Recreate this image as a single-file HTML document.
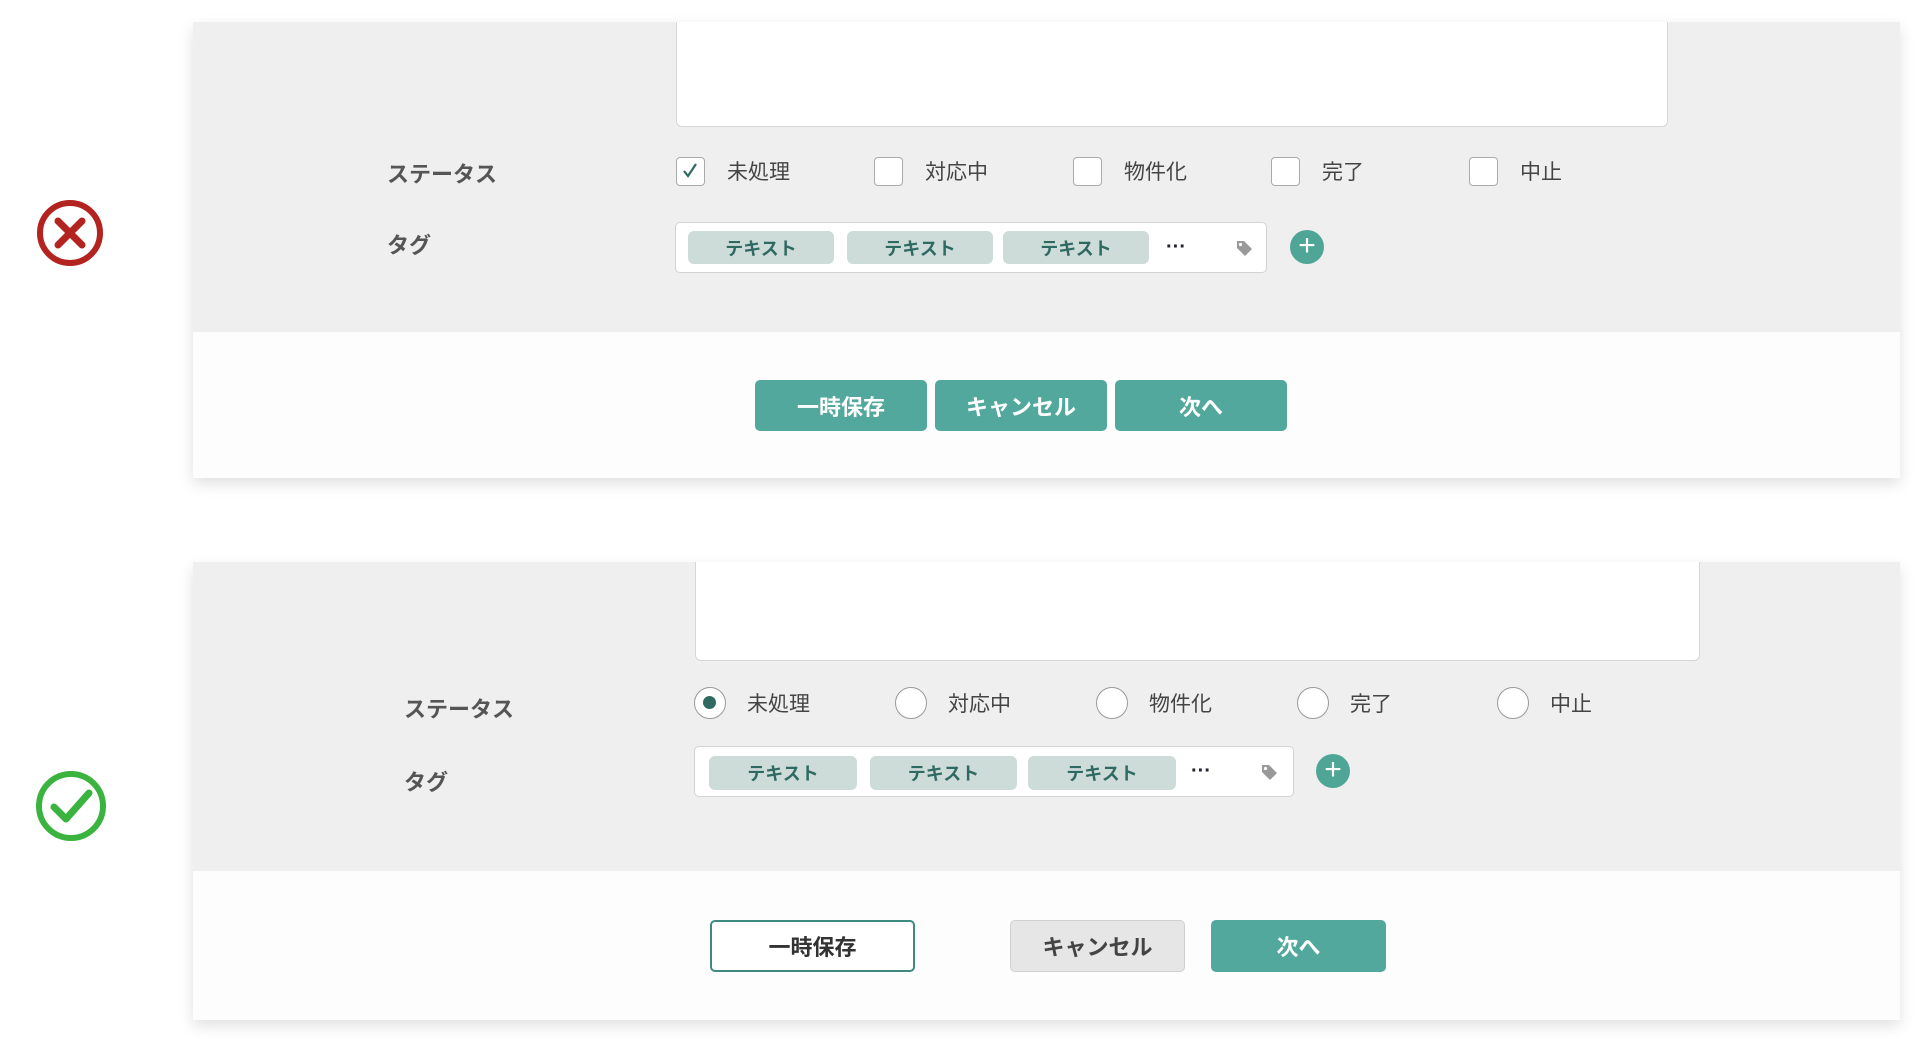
<!DOCTYPE html>
<html><head><meta charset="utf-8"><style>
*{box-sizing:border-box;margin:0;padding:0}
body{width:1920px;height:1039px;background:#fff;position:relative;overflow:hidden;font-family:"Liberation Sans","Noto Sans CJK JP",sans-serif;color:#444}
.a{position:absolute}
.panel{position:absolute;left:193px;width:1707px;background:#fdfdfd;box-shadow:0 6px 14px rgba(0,0,0,.12)}
.gray{position:absolute;left:0;top:0;width:100%;background:#efefef}
.ta{position:absolute;background:#fff;border:1px solid #d6d6d6;border-top:none;border-radius:0 0 6px 6px}
.lbl{position:absolute;font-size:22px;font-weight:bold;color:#555;transform:translateY(-50%)}
.txt{position:absolute;font-size:21px;color:#444;transform:translateY(-50%)}
.cb{position:absolute;width:29px;height:29px;border:1.5px solid #aaa;border-radius:4px;background:#fff}
.rd{position:absolute;width:32px;height:32px;border:1.5px solid #999;border-radius:50%;background:#fff}
.tagbox{position:absolute;background:#fff;border:1px solid #d3d3d3;border-radius:5px}
.chip{position:absolute;background:#cddbd9;border-radius:6px;color:#2f6a62;font-size:18px;font-weight:bold;display:flex;align-items:center;justify-content:center}
.plus{position:absolute;width:34px;height:34px;border-radius:50%;background:#4fa596;color:#fff;font-size:30px;line-height:32px;text-align:center}
.btn{position:absolute;border-radius:5px;font-size:22px;font-weight:bold;display:flex;align-items:center;justify-content:center}
.t{background:#52a89c;color:#fff}
</style></head><body>

<svg class="a" style="left:34px;top:197px" width="72" height="72" viewBox="0 0 72 72"><circle cx="36" cy="36" r="30" fill="none" stroke="#b3231f" stroke-width="6"/><path d="M24 24L48 48M48 24L24 48" stroke="#b3231f" stroke-width="7" stroke-linecap="round"/></svg>
<svg class="a" style="left:34px;top:769px" width="74" height="74" viewBox="0 0 74 74"><circle cx="37" cy="37" r="32" fill="none" stroke="#3bb33f" stroke-width="6"/><path d="M20 38L32 50L55 24" fill="none" stroke="#3bb33f" stroke-width="7" stroke-linecap="round" stroke-linejoin="round"/></svg>

<div class="panel" style="top:22px;height:456px">
  <div class="gray" style="height:310px"></div>
  <div class="ta" style="left:483px;top:0;width:992px;height:105px"></div>
  <div class="lbl" style="left:194px;top:151px">ステータス</div>
  <div class="cb" style="left:483px;top:135px"><svg width="26" height="26" viewBox="0 0 26 26"><path d="M7 13L11 18L19 6" fill="none" stroke="#2f6a62" stroke-width="2.2"/></svg></div>
  <div class="txt" style="left:534px;top:149px">未処理</div>
  <div class="cb" style="left:681px;top:135px"></div><div class="txt" style="left:732px;top:149px">対応中</div>
  <div class="cb" style="left:880px;top:135px"></div><div class="txt" style="left:931px;top:149px">物件化</div>
  <div class="cb" style="left:1078px;top:135px"></div><div class="txt" style="left:1129px;top:149px">完了</div>
  <div class="cb" style="left:1276px;top:135px"></div><div class="txt" style="left:1327px;top:149px">中止</div>
  <div class="lbl" style="left:194px;top:222px">タグ</div>
  <div class="tagbox" style="left:482px;top:200px;width:592px;height:51px">
    <div class="chip" style="left:12px;top:8px;width:146px;height:33px">テキスト</div>
    <div class="chip" style="left:171px;top:8px;width:146px;height:33px">テキスト</div>
    <div class="chip" style="left:327px;top:8px;width:146px;height:33px">テキスト</div>
    <div class="a" style="left:490px;top:13px;font-size:20px;color:#223;font-weight:bold">···</div>
    <svg class="a" style="left:558px;top:15px" width="20" height="20" viewBox="0 0 20 20"><path d="M3 3h7l8 8-7 7-8-8z" fill="#999"/><circle cx="6.5" cy="6.5" r="1.6" fill="#fff"/></svg>
  </div>
  <div class="plus" style="left:1097px;top:208px">+</div>
  <div class="btn t" style="left:562px;top:358px;width:172px;height:51px">一時保存</div>
  <div class="btn t" style="left:742px;top:358px;width:172px;height:51px">キャンセル</div>
  <div class="btn t" style="left:922px;top:358px;width:172px;height:51px">次へ</div>
</div>

<div class="panel" style="top:562px;height:458px">
  <div class="gray" style="height:309px"></div>
  <div class="ta" style="left:502px;top:0;width:1005px;height:99px"></div>
  <div class="lbl" style="left:211px;top:146px">ステータス</div>
  <div class="rd" style="left:501px;top:125px"><div style="position:absolute;left:8px;top:8px;width:13px;height:13px;border-radius:50%;background:#2f6a62"></div></div>
  <div class="txt" style="left:554px;top:141px">未処理</div>
  <div class="rd" style="left:702px;top:125px"></div><div class="txt" style="left:755px;top:141px">対応中</div>
  <div class="rd" style="left:903px;top:125px"></div><div class="txt" style="left:956px;top:141px">物件化</div>
  <div class="rd" style="left:1104px;top:125px"></div><div class="txt" style="left:1157px;top:141px">完了</div>
  <div class="rd" style="left:1304px;top:125px"></div><div class="txt" style="left:1357px;top:141px">中止</div>
  <div class="lbl" style="left:211px;top:219px">タグ</div>
  <div class="tagbox" style="left:501px;top:184px;width:600px;height:51px">
    <div class="chip" style="left:14px;top:9px;width:148px;height:34px">テキスト</div>
    <div class="chip" style="left:175px;top:9px;width:147px;height:34px">テキスト</div>
    <div class="chip" style="left:333px;top:9px;width:148px;height:34px">テキスト</div>
    <div class="a" style="left:496px;top:13px;font-size:20px;color:#223;font-weight:bold">···</div>
    <svg class="a" style="left:564px;top:15px" width="20" height="20" viewBox="0 0 20 20"><path d="M3 3h7l8 8-7 7-8-8z" fill="#999"/><circle cx="6.5" cy="6.5" r="1.6" fill="#fff"/></svg>
  </div>
  <div class="plus" style="left:1123px;top:192px">+</div>
  <div class="btn" style="left:517px;top:358px;width:205px;height:52px;border:2px solid #3f8a80;background:#fff;color:#333">一時保存</div>
  <div class="btn" style="left:817px;top:358px;width:175px;height:52px;border:1.5px solid #d0d0d0;background:#e6e6e6;color:#444">キャンセル</div>
  <div class="btn t" style="left:1018px;top:358px;width:175px;height:52px">次へ</div>
</div>
</body></html>
